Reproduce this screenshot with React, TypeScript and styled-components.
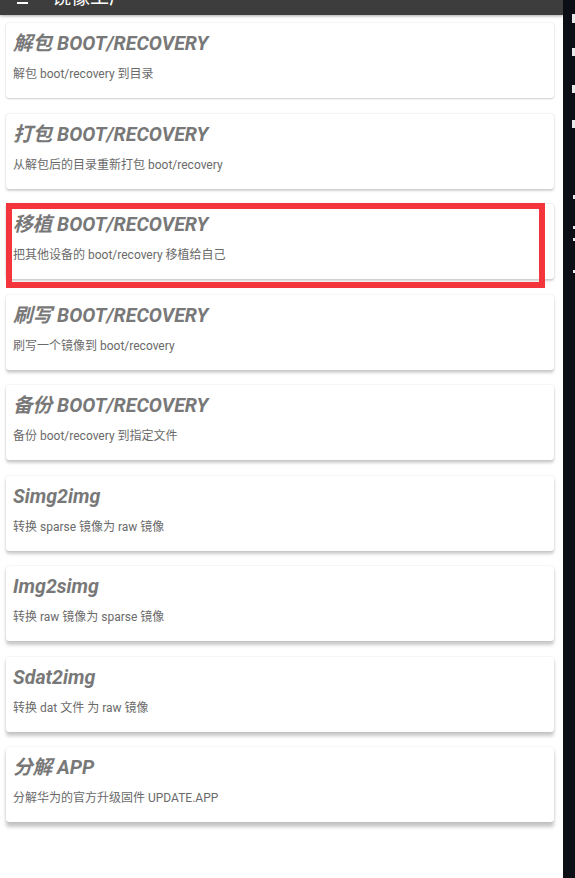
import React from "react";
import styled, { createGlobalStyle } from "styled-components";

const Global = createGlobalStyle`
  html, body { margin: 0; padding: 0; background: #ffffff; }
  body { font-family: Roboto, "Noto Sans CJK SC", sans-serif; }
  * { box-sizing: border-box; }
`;

const Screen = styled.div`
  display: flex;
  width: 575px;
  height: 878px;
  overflow: hidden;
`;

const Main = styled.div`
  width: 563px;
  display: flex;
  flex-direction: column;
  background: #ffffff;
`;

const Toolbar = styled.div`
  height: 15px;
  overflow: hidden;
  background: #3d3d3d;
  box-shadow: 0 1px 3px rgba(0, 0, 0, 0.35);
  position: relative;
  z-index: 1;
`;

const ToolbarInner = styled.div`
  height: 56px;
  margin-top: -41px;
  display: flex;
  align-items: center;
  padding-left: 17px;
  gap: 24px;
`;

const Burger = styled.div`
  width: 11px;
  display: flex;
  flex-direction: column;
  gap: 4px;
  margin-top: 20px;
  & > span {
    display: block;
    height: 2px;
    background: #ffffff;
  }
`;

const ToolbarTitle = styled.div`
  color: #ffffff;
  font-family: Roboto, "Noto Sans CJK SC", sans-serif;
  font-size: 19px;
  margin-top: 16px;
`;

const List = styled.div`
  display: flex;
  flex-direction: column;
  gap: 15.5px;
  padding: 8px 9px 0 6px;
`;

const Card = styled.div<{ $elev: number }>`
  position: relative;
  height: 75px;
  background: #ffffff;
  border-radius: 3px;
  padding: 9px 7px 0 7px;
  box-shadow: 0 0 2px rgba(0, 0, 0, 0.12),
    0 ${(p) => 1 + p.$elev}px ${(p) => 2 + p.$elev * 0.6}px rgba(0, 0, 0, ${(p) => 0.16 + p.$elev * 0.02});
`;

const Title = styled.div`
  font-family: Roboto, "Noto Sans CJK SC", sans-serif;
  font-weight: 700;
  font-style: italic;
  font-size: 19.6px;
  line-height: 24px;
  color: #787878;
  white-space: nowrap;
`;

const Subtitle = styled.div`
  font-family: Roboto, "Noto Sans CJK SC", sans-serif;
  font-size: 12px;
  line-height: 16px;
  margin-top: 10px;
  color: #6a6a6a;
  white-space: nowrap;
`;

const Highlight = styled.div`
  position: absolute;
  left: 0;
  top: -1px;
  right: 9px;
  bottom: -9px;
  border: 6px solid #f4353c;
  pointer-events: none;
`;

const Side = styled.div`
  width: 12px;
  background: #0c1016;
  display: flex;
  flex-direction: column;
  align-items: flex-end;
`;

const Mark = styled.div<{ $gap: number; $h: number; $w: number }>`
  margin-top: ${(p) => p.$gap}px;
  height: ${(p) => p.$h}px;
  width: ${(p) => p.$w}px;
  background: #e8e8e8;
`;

const items = [
  { t: "解包 BOOT/RECOVERY", s: "解包 boot/recovery 到目录" },
  { t: "打包 BOOT/RECOVERY", s: "从解包后的目录重新打包 boot/recovery" },
  { t: "移植 BOOT/RECOVERY", s: "把其他设备的 boot/recovery 移植给自己", hl: true },
  { t: "刷写 BOOT/RECOVERY", s: "刷写一个镜像到 boot/recovery" },
  { t: "备份 BOOT/RECOVERY", s: "备份 boot/recovery 到指定文件" },
  { t: "Simg2img", s: "转换 sparse 镜像为 raw 镜像" },
  { t: "Img2simg", s: "转换 raw 镜像为 sparse 镜像" },
  { t: "Sdat2img", s: "转换 dat 文件 为 raw 镜像" },
  { t: "分解 APP", s: "分解华为的官方升级固件 UPDATE.APP" },
];

const marks = [
  { g: 14, h: 9, w: 3 },
  { g: 25, h: 8, w: 3 },
  { g: 29, h: 8, w: 3 },
  { g: 27, h: 8, w: 3 },
  { g: 67, h: 4, w: 2 },
  { g: 27, h: 3, w: 2 },
  { g: 9, h: 3, w: 2 },
  { g: 29, h: 3, w: 2 },
];

export default function App() {
  return (
    <>
      <Global />
      <Screen>
        <Main>
          <Toolbar>
            <ToolbarInner>
              <Burger>
                <span />
                <span />
                <span />
              </Burger>
              <ToolbarTitle>镜像工厂</ToolbarTitle>
            </ToolbarInner>
          </Toolbar>
          <List>
            {items.map((it, i) => (
              <Card key={i} $elev={i * 0.4}>
                <Title>{it.t}</Title>
                <Subtitle>{it.s}</Subtitle>
                {it.hl && <Highlight />}
              </Card>
            ))}
          </List>
        </Main>
        <Side>
          {marks.map((m, i) => (
            <Mark key={i} $gap={m.g} $h={m.h} $w={m.w} />
          ))}
        </Side>
      </Screen>
    </>
  );
}
